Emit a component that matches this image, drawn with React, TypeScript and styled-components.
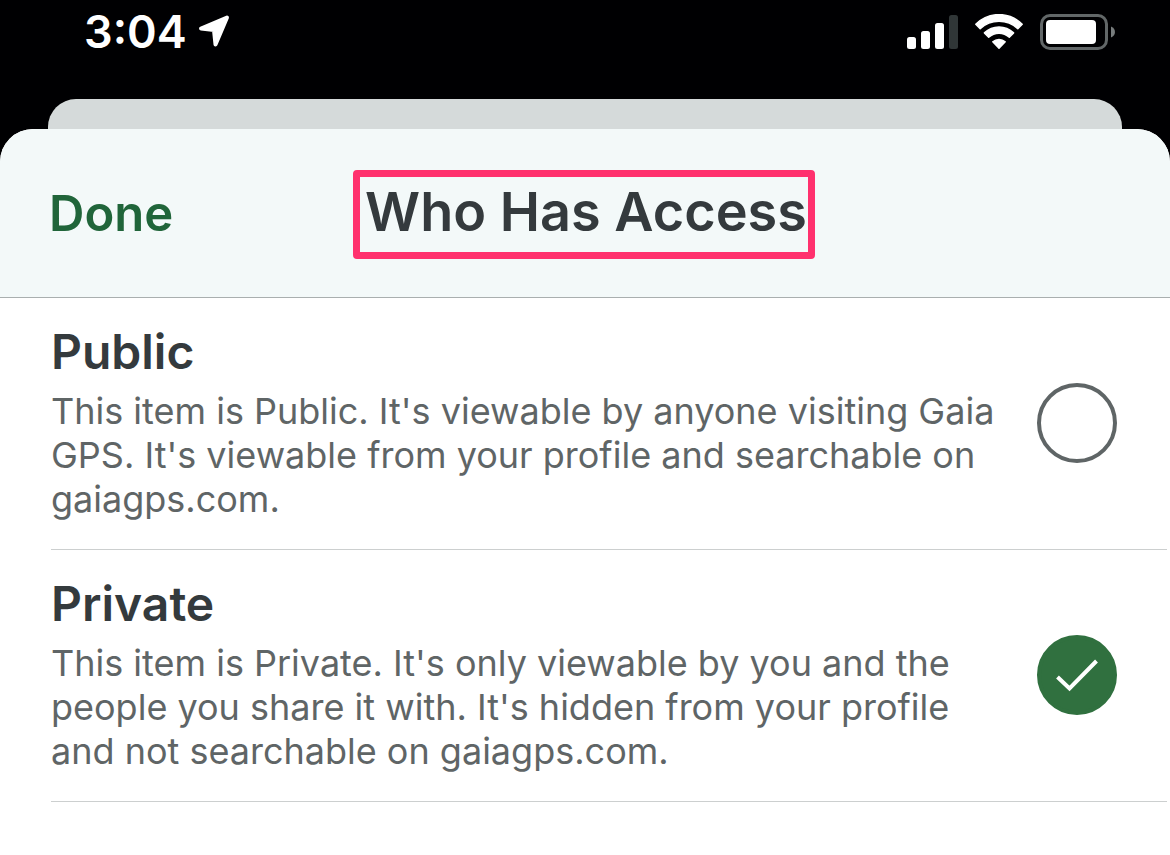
import React, { useState } from "react";
import styled, { createGlobalStyle } from "styled-components";

const GlobalStyle = createGlobalStyle`
  *, *::before, *::after { box-sizing: border-box; }
  body {
    margin: 0;
    background: #000002;
    font-family: Inter, "Liberation Sans", sans-serif;
  }
`;

const Screen = styled.div`
  display: flex;
  flex-direction: column;
  min-height: 100vh;
`;

const StatusBar = styled.div`
  display: flex;
  justify-content: space-between;
  align-items: center;
  height: 64px;
  padding: 0 54px 0 84px;
  color: #fff;
`;

const StatusGroup = styled.div<{ $gap: number }>`
  display: flex;
  align-items: center;
  gap: ${(p) => p.$gap}px;
`;

const Time = styled.span`
  font-size: 45px;
  line-height: 56px;
  font-weight: 600;
`;

const SheetBehind = styled.div`
  height: 30px;
  margin: 35px 48px 0;
  border-radius: 28px 28px 0 0;
  background: #d5dada;
`;

const Sheet = styled.main`
  flex: 1;
  border-radius: 33px 33px 0 0;
  background: #fff;
  overflow: hidden;
`;

const Header = styled.header`
  display: grid;
  grid-template-columns: 1fr auto 1fr;
  align-items: baseline;
  padding: 41px 51px 38px 49px;
  background: #f3f9f9;
  border-bottom: 1px solid #a9afaf;
`;

const DoneButton = styled.button`
  justify-self: start;
  padding: 0;
  border: 0;
  background: none;
  color: #20653a;
  font: 600 49px/60px Inter, "Liberation Sans", sans-serif;
  cursor: pointer;
`;

const Title = styled.h1`
  margin: 0;
  padding: 3px 1px 8px 5px;
  border: 7px solid #ff316e;
  border-radius: 4px;
  color: #343a3d;
  font-size: 54px;
  line-height: 64px;
  font-weight: 600;
  white-space: nowrap;
`;

const Options = styled.div`
  padding: 0 3px 0 51px;
`;

const Option = styled.label`
  display: flex;
  align-items: center;
  justify-content: space-between;
  gap: 24px;
  padding: 26px 50px 28px 0;
  border-bottom: 1px solid #cccfcf;
  cursor: pointer;
`;

const OptionText = styled.span`
  display: flex;
  flex-direction: column;
  gap: 9px;
  max-width: 960px;
`;

const OptionName = styled.span`
  color: #343a3d;
  font-size: 48px;
  line-height: 56px;
  font-weight: 600;
`;

const OptionDetail = styled.span`
  color: #5f6566;
  font-size: 36px;
  line-height: 44px;
`;

const RadioSlot = styled.span`
  display: grid;
  flex: none;
  width: 80px;
  height: 80px;

  & > * {
    grid-area: 1 / 1;
  }
`;

const Radio = styled.input`
  appearance: none;
  width: 80px;
  height: 80px;
  margin: 0;
  border: 4px solid #5f6566;
  border-radius: 50%;
  background: #fff;
  cursor: pointer;

  &:checked {
    border-color: #30703f;
    background: #30703f;
  }
`;

const Check = styled.svg`
  pointer-events: none;
`;

const options = [
  {
    id: "public",
    name: "Public",
    detail:
      "This item is Public. It's viewable by anyone visiting Gaia GPS. It's viewable from your profile and searchable on gaiagps.com.",
  },
  {
    id: "private",
    name: "Private",
    detail:
      "This item is Private. It's only viewable by you and the people you share it with. It's hidden from your profile and not searchable on gaiagps.com.",
  },
];

function LocationIcon() {
  return (
    <svg width="32" height="34" viewBox="0 0 32 34" aria-hidden="true">
      <path
        d="M29 2.5 3 13.5 16 15 17.500 29.500Z"
        fill="#fff"
        stroke="#fff"
        strokeWidth="4"
        strokeLinejoin="round"
      />
    </svg>
  );
}

function SignalIcon() {
  return (
    <svg width="51" height="36" viewBox="0 0 51 36" aria-hidden="true">
      <rect x="0" y="23" width="9" height="12" rx="2.5" fill="#fff" />
      <rect x="14" y="17" width="9" height="18" rx="2.5" fill="#fff" />
      <rect x="28" y="9" width="9" height="26" rx="2.5" fill="#fff" />
      <rect x="42" y="1" width="9" height="34" rx="2.5" fill="#303637" />
    </svg>
  );
}

function WifiIcon() {
  return (
    <svg width="48" height="36" viewBox="0 0 48 36" aria-hidden="true">
      <g fill="#fff" stroke="#fff" strokeWidth="1.5" strokeLinejoin="round">
        <path d="M.8 10.200C14-2.600 34-2.600 47.200 10.200L42.800 14.600C32.200 4.800 15.800 4.800 5.200 14.600Z" />
        <path d="M9.400 18.900C17.700 11 30.300 11 38.600 18.900L34.300 23.200C28.400 17.900 19.600 17.900 13.700 23.200Z" />
        <path d="M17.800 27.800C21.400 24.700 26.600 24.700 30.200 27.800L24 34.200Z" />
      </g>
    </svg>
  );
}

function BatteryIcon() {
  return (
    <svg width="76" height="36" viewBox="0 0 76 36" aria-hidden="true">
      <rect x="1.5" y="1.5" width="65" height="33" rx="8.5" fill="none" stroke="#626768" strokeWidth="3" />
      <rect x="6" y="6" width="50" height="24" rx="4" fill="#fff" />
      <path d="M71 12.500C76.300 14.500 76.300 21.500 71 23.500Z" fill="#777c7d" />
    </svg>
  );
}

export default function App() {
  const [access, setAccess] = useState("private");

  return (
    <>
      <GlobalStyle />
      <Screen>
        <StatusBar>
          <StatusGroup $gap={11}>
            <Time>3:04</Time>
            <LocationIcon />
          </StatusGroup>
          <StatusGroup $gap={17}>
            <SignalIcon />
            <WifiIcon />
            <BatteryIcon />
          </StatusGroup>
        </StatusBar>
        <SheetBehind />
        <Sheet>
          <Header>
            <DoneButton type="button">Done</DoneButton>
            <Title>Who Has Access</Title>
          </Header>
          <Options role="radiogroup" aria-label="Who Has Access">
            {options.map((o) => (
              <Option key={o.id} htmlFor={o.id}>
                <OptionText>
                  <OptionName>{o.name}</OptionName>
                  <OptionDetail>{o.detail}</OptionDetail>
                </OptionText>
                <RadioSlot>
                  <Radio
                    id={o.id}
                    type="radio"
                    name="access"
                    checked={access === o.id}
                    onChange={() => setAccess(o.id)}
                  />
                  {access === o.id && (
                    <Check width="80" height="80" viewBox="0 0 80 80" aria-hidden="true">
                      <path d="M20.500 42 32.500 53.500 59.500 26" fill="none" stroke="#fff" strokeWidth="4" />
                    </Check>
                  )}
                </RadioSlot>
              </Option>
            ))}
          </Options>
        </Sheet>
      </Screen>
    </>
  );
}
